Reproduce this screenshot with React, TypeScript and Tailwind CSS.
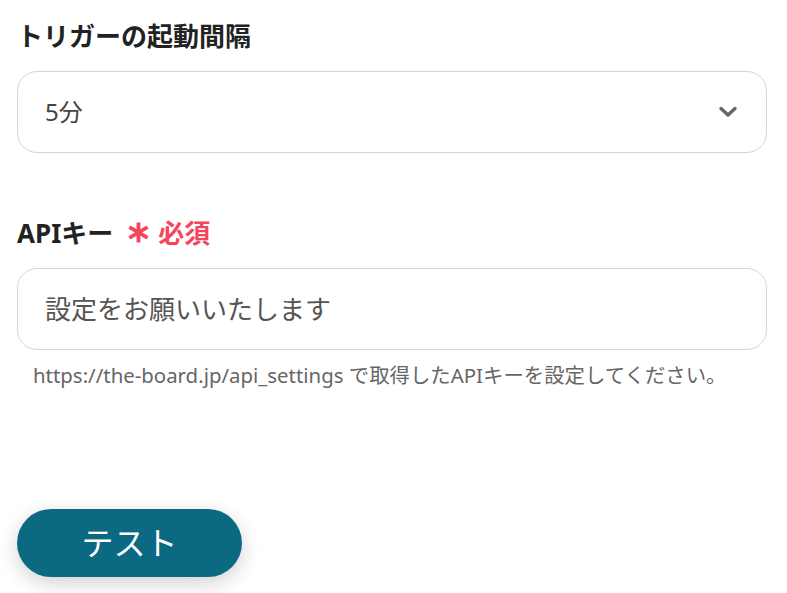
import React from 'react';

const font = { fontFamily: '"Noto Sans", "Noto Sans CJK JP", sans-serif' };

const RequiredMark: React.FC = () => (
    <svg width="21" height="21" viewBox="0 0 21 21" fill="none">
        <g stroke="#f5455c" strokeWidth="3.8" strokeLinecap="butt">
            <path d="M10.5 0.5 L10.5 20.5" />
            <path d="M1.4 5.2 L19.6 15.8" />
            <path d="M1.4 15.8 L19.6 5.2" />
        </g>
    </svg>
);

const App: React.FC = () => {
    return (
        <div className="w-[787px] h-[593px] bg-white flex flex-col px-[17px] pt-[18px]" style={font}>
            <h3 className="text-[26px] leading-[36px] font-bold text-[#222]">トリガーの起動間隔</h3>
            <div className="mt-[17px] h-[82px] w-[750px] rounded-[20px] border border-[#d3d6dc] flex items-center justify-between pl-[27px] pr-[28px]">
                <span className="text-[24px] text-[#444]">5分</span>
                <svg width="20" height="12" viewBox="0 0 20 12" fill="none">
                    <path d="M3 2.5 L10 9 L17 2.5" stroke="#666" strokeWidth="3.4" strokeLinecap="round" strokeLinejoin="round" />
                </svg>
            </div>
            <div className="mt-[62px] flex items-center">
                <h3 className="text-[26px] leading-[36px] font-bold text-[#222]">APIキー</h3>
                <span className="ml-[15px] mt-[-1px] flex"><RequiredMark /></span>
                <span className="ml-[9px] text-[26px] leading-[36px] font-bold text-[#f5455c]">必須</span>
            </div>
            <div className="mt-[17px] h-[82px] w-[750px] rounded-[20px] border border-[#d3d6dc] flex items-center pl-[27px]">
                <span className="text-[26px] text-[#555]">設定をお願いいたします</span>
            </div>
            <p className="mt-[11px] pl-[16px] text-[20.4px] leading-[28px] text-[#666]">
                https://the-board.jp/api_settings で取得したAPIキーを設定してください。
            </p>
            <div className="mt-[120px]">
                <button className="w-[225px] h-[68px] rounded-full bg-[#0b6a82] text-white text-[32px] shadow-[0_6px_20px_rgba(0,0,0,0.18)]">
                    テスト
                </button>
            </div>
        </div>
    );
};

export default App;
